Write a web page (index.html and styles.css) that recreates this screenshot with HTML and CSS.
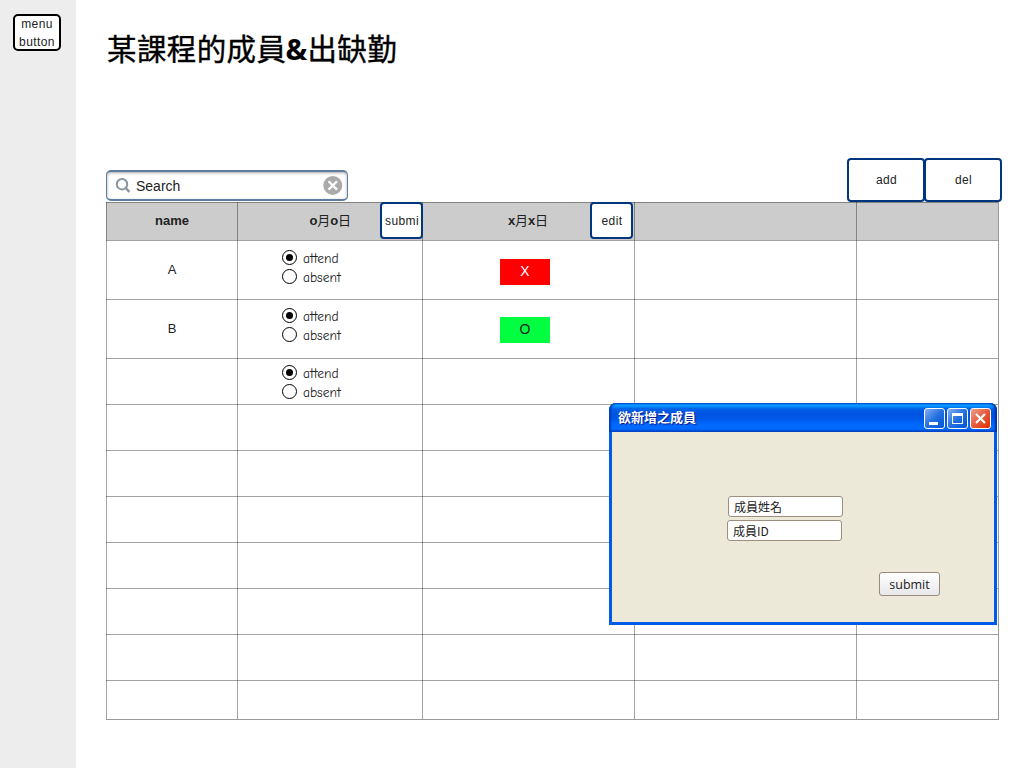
FILE: index.html
```html
<!DOCTYPE html>
<html lang="zh-Hant">
<head>
<meta charset="utf-8">
<title>某課程的成員&amp;出缺勤</title>
<link rel="stylesheet" href="styles.css">
</head>
<body>
<aside class="sidebar"><button class="menu">menu<br>button</button></aside>
<main class="main">
  <h1 class="title">某課程的成員<b>&amp;</b>出缺勤</h1>
  <div class="toolbar">
    <div class="search">
      <svg width="18" height="18" viewBox="0 0 18 18" fill="none" stroke="#8a949e" stroke-width="2"><circle cx="8" cy="8.2" r="5.2"/><path d="M11.7 12 15.4 15.8" stroke-width="2.4"/></svg>
      <span class="search-text">Search</span>
      <svg width="20" height="20" viewBox="0 0 20 20"><circle cx="9.8" cy="10.4" r="9.5" fill="#aaa"/><path d="M5.6 6.2 14 14.6M14 6.2 5.6 14.6" stroke="#fff" stroke-width="2.3"/></svg>
    </div>
    <div class="actions"><button class="btn big">add</button><button class="btn big">del</button></div>
  </div>
  <div class="table">
    <div class="cell head">name</div>
    <div class="cell head date first"><span class="label">o<i>月</i>o<i>日</i></span><button class="btn small clip">submi</button></div>
    <div class="cell head date second"><span class="label">x<i>月</i>x<i>日</i></span><button class="btn small">edit</button></div>
    <div class="cell head"></div><div class="cell head"></div>

    <div class="cell">A</div>
    <div class="cell radios"><label><span class="dot on"></span>attend</label><label><span class="dot"></span>absent</label></div>
    <div class="cell mark"><span class="tag no">X</span></div><div class="cell"></div><div class="cell"></div>

    <div class="cell">B</div>
    <div class="cell radios mid"><label><span class="dot on"></span>attend</label><label><span class="dot"></span>absent</label></div>
    <div class="cell mark"><span class="tag yes">O</span></div><div class="cell"></div><div class="cell"></div>

    <div class="cell"></div>
    <div class="cell radios low"><label><span class="dot on"></span>attend</label><label><span class="dot"></span>absent</label></div>
    <div class="cell"></div><div class="cell"></div><div class="cell"></div>

    <div class="cell"></div><div class="cell"></div><div class="cell"></div><div class="cell"></div><div class="cell"></div>
    <div class="cell"></div><div class="cell"></div><div class="cell"></div><div class="cell"></div><div class="cell"></div>
    <div class="cell"></div><div class="cell"></div><div class="cell"></div><div class="cell"></div><div class="cell"></div>
    <div class="cell"></div><div class="cell"></div><div class="cell"></div><div class="cell"></div><div class="cell"></div>
    <div class="cell"></div><div class="cell"></div><div class="cell"></div><div class="cell"></div><div class="cell"></div>
    <div class="cell"></div><div class="cell"></div><div class="cell"></div><div class="cell"></div><div class="cell"></div>
    <div class="cell"></div><div class="cell"></div><div class="cell"></div><div class="cell"></div><div class="cell"></div>
  </div>
</main>
<section class="dialog">
  <header class="bar">
    <span class="bar-title">欲新增之成員</span>
    <span class="win"><svg width="19" height="19"><path d="M4 13h9v3H4z" fill="#fff"/></svg></span>
    <span class="win"><svg width="19" height="19"><path d="M4 4h11v11H4zM5 7v7h9V7z" fill="#fff" fill-rule="evenodd"/></svg></span>
    <span class="win close"><svg width="19" height="19"><path d="M5 5 14 14M14 5 5 14" stroke="#fff" stroke-width="2.2"/></svg></span>
  </header>
  <div class="form">
    <div class="field name">成員姓名</div>
    <div class="field">成員ID</div>
    <button class="submit">submit</button>
  </div>
</section>
</body>
</html>
```
FILE: styles.css
```css
* { box-sizing: border-box; }
body {
  margin: 0;
  width: 1024px;
  height: 768px;
  display: flex;
  overflow: hidden;
  background: #fff;
  color: #222;
  font: 13px/18px "Liberation Sans", "Noto Sans CJK TC", sans-serif;
}
button { font: inherit; color: inherit; padding: 0; margin: 0; }
.sidebar { width: 76px; background: #ededed; padding: 14px 0 0 13px; }
.menu {
  display: flex;
  align-items: center;
  justify-content: center;
  width: 48px;
  height: 37px;
  border: 2px solid #000;
  border-radius: 5px;
  background: #fff;
  font-size: 12px;
  letter-spacing: .4px;
}
.main { width: 948px; padding-left: 30px; }
.title {
  margin: 0;
  height: 158px;
  padding: 25px 0 0 1px;
  font: 400 29.5px/44px "Noto Sans CJK TC", sans-serif;
  color: #000;
  letter-spacing: .4px;
  -webkit-text-stroke: .4px #000;
  white-space: nowrap;
}
.title b {
  display: inline-block;
  width: 22px;
  margin-left: -1px;
  font: 700 29px/44px "Open Sans", sans-serif;
  -webkit-text-stroke: 0;
}
.toolbar { display: flex; justify-content: space-between; width: 896px; height: 44px; }
.search {
  display: flex;
  align-items: center;
  width: 242px;
  height: 31px;
  margin-top: 12px;
  padding: 0 4px 1px 7px;
  border: 2px solid #5d7e9f;
  border-width: 2px 1.5px;
  border-radius: 5px;
  box-shadow: inset 0 1px 3px #aaa;
}
.search-text { flex: 1; padding: 2px 0 0 4px; font-size: 14px; }
.actions { display: flex; }
.btn {
  display: flex;
  align-items: center;
  justify-content: center;
  border: 2px solid #003580;
  border-radius: 4px;
  background: #fff;
  font-size: 12px;
  letter-spacing: .4px;
}
.big { width: 78px; height: 44px; padding-left: 1px; }
.big + .big { margin-left: -1px; }
.small { width: 43px; height: 37px; padding-left: 1px; }
.small.clip { justify-content: flex-start; padding-left: 3px; overflow: hidden; }
.table {
  display: grid;
  width: 893px;
  grid-template-columns: 131px 185px 212px 222px 143px;
  grid-template-rows: 38px 59px 59px 46px 46px 46px 46px 46px 46px 46px 39px;
  border-bottom: 1px solid #999;
}
.cell {
  display: flex;
  align-items: center;
  justify-content: center;
  padding-left: 1px;
  background-image: linear-gradient(rgba(0,0,0,.36) 1px, transparent 1px), linear-gradient(90deg, rgba(0,0,0,.36) 1px, transparent 1px);
}
.cell:nth-child(5n) { border-right: 1px solid #999; }
.head { background-color: #ccc; font-weight: 700; }
.head i { font-style: normal; font-weight: 400; }
.date { justify-content: flex-end; }
.date .label { letter-spacing: -.1px; }
.first .label { margin-right: 29px; }
.second .label { margin-right: 42px; }
.date .btn { font-weight: 400; margin-top: -1px; }
.first .btn { margin-right: -1px; position: relative; }
.second .btn { margin-right: 1px; }
.radios {
  flex-direction: column;
  align-items: flex-start;
  justify-content: flex-start;
  padding: 8px 0 0 45px;
  font: 13.5px/19px "Comic Neue", "Open Sans", sans-serif;
}
.radios.mid { padding-top: 7px; }
.radios.low { padding-top: 5px; }
.radios label { display: flex; align-items: center; height: 19px; line-height: 19px; padding-top: 2px; }
.dot {
  display: flex;
  align-items: center;
  justify-content: center;
  width: 15px;
  height: 15px;
  margin: -2px 6px 0 0;
  border: 1px solid #000;
  border-radius: 50%;
}
.on::after { content: ""; width: 7px; height: 7px; border-radius: 50%; background: #000; }
.mark { align-items: flex-start; justify-content: flex-start; padding: 19px 0 0 78px; }
.tag { width: 50px; height: 26px; line-height: 25px; text-align: center; font-size: 14px; }
.no { background: #f00; color: #fff; }
.yes { background: #00ff40; margin-top: -1px; }
.dialog {
  position: absolute;
  left: 609px;
  top: 403px;
  width: 388px;
  height: 222px;
  border: 3px solid #005ae6;
  border-top: 0;
  border-radius: 7px 7px 0 0;
  background: #ece9d8;
}
.bar {
  display: flex;
  align-items: center;
  gap: 2px;
  height: 29px;
  margin: 0 -3px;
  padding: 2px 6px 0 9px;
  border-radius: 7px 7px 0 0;
  background: linear-gradient(#0058e0 0, #0997ff 6%, #0997ff 11%, #0060e8 20%, #0053e1 38%, #0058e8 55%, #006aff 75%, #006aff 88%, #0048d0 100%);
  box-shadow: inset 2px 0 2px #0040c0, inset -2px 0 2px #0030a0;
}
.bar-title {
  flex: 1;
  padding-bottom: 3px;
  color: #fff;
  font: 700 13px/20px "Noto Sans CJK TC", sans-serif;
  text-shadow: 1px 1px 1px #0a1883;
}
.win {
  width: 21px;
  height: 21px;
  border: 1px solid #fff;
  border-radius: 3px;
  background: linear-gradient(135deg, #83aef5, #2470df 50%, #0054d8);
}
.win svg { display: block; }
.close { background: linear-gradient(135deg, #f0a08e, #e55b3c 50%, #e02c00); }
.form {
  display: flex;
  flex-direction: column;
  height: 190px;
  padding: 64px 54px 0 115px;
}
.field {
  width: 115px;
  height: 21px;
  padding-left: 5px;
  border: 1px solid #9c8f80;
  border-radius: 3px;
  background: #fff;
  font: 12px/20px "Noto Sans CJK TC", sans-serif;
}
.field.name { margin: 0 0 3px 1px; }
.submit {
  align-self: flex-end;
  width: 61px;
  height: 24px;
  margin-top: 31px;
  padding-top: 1px;
  border: 1px solid #978b7d;
  border-radius: 3px;
  background: linear-gradient(#fff, #e8e8ea);
  font: 12.5px/20px "Open Sans", sans-serif;
}
```
